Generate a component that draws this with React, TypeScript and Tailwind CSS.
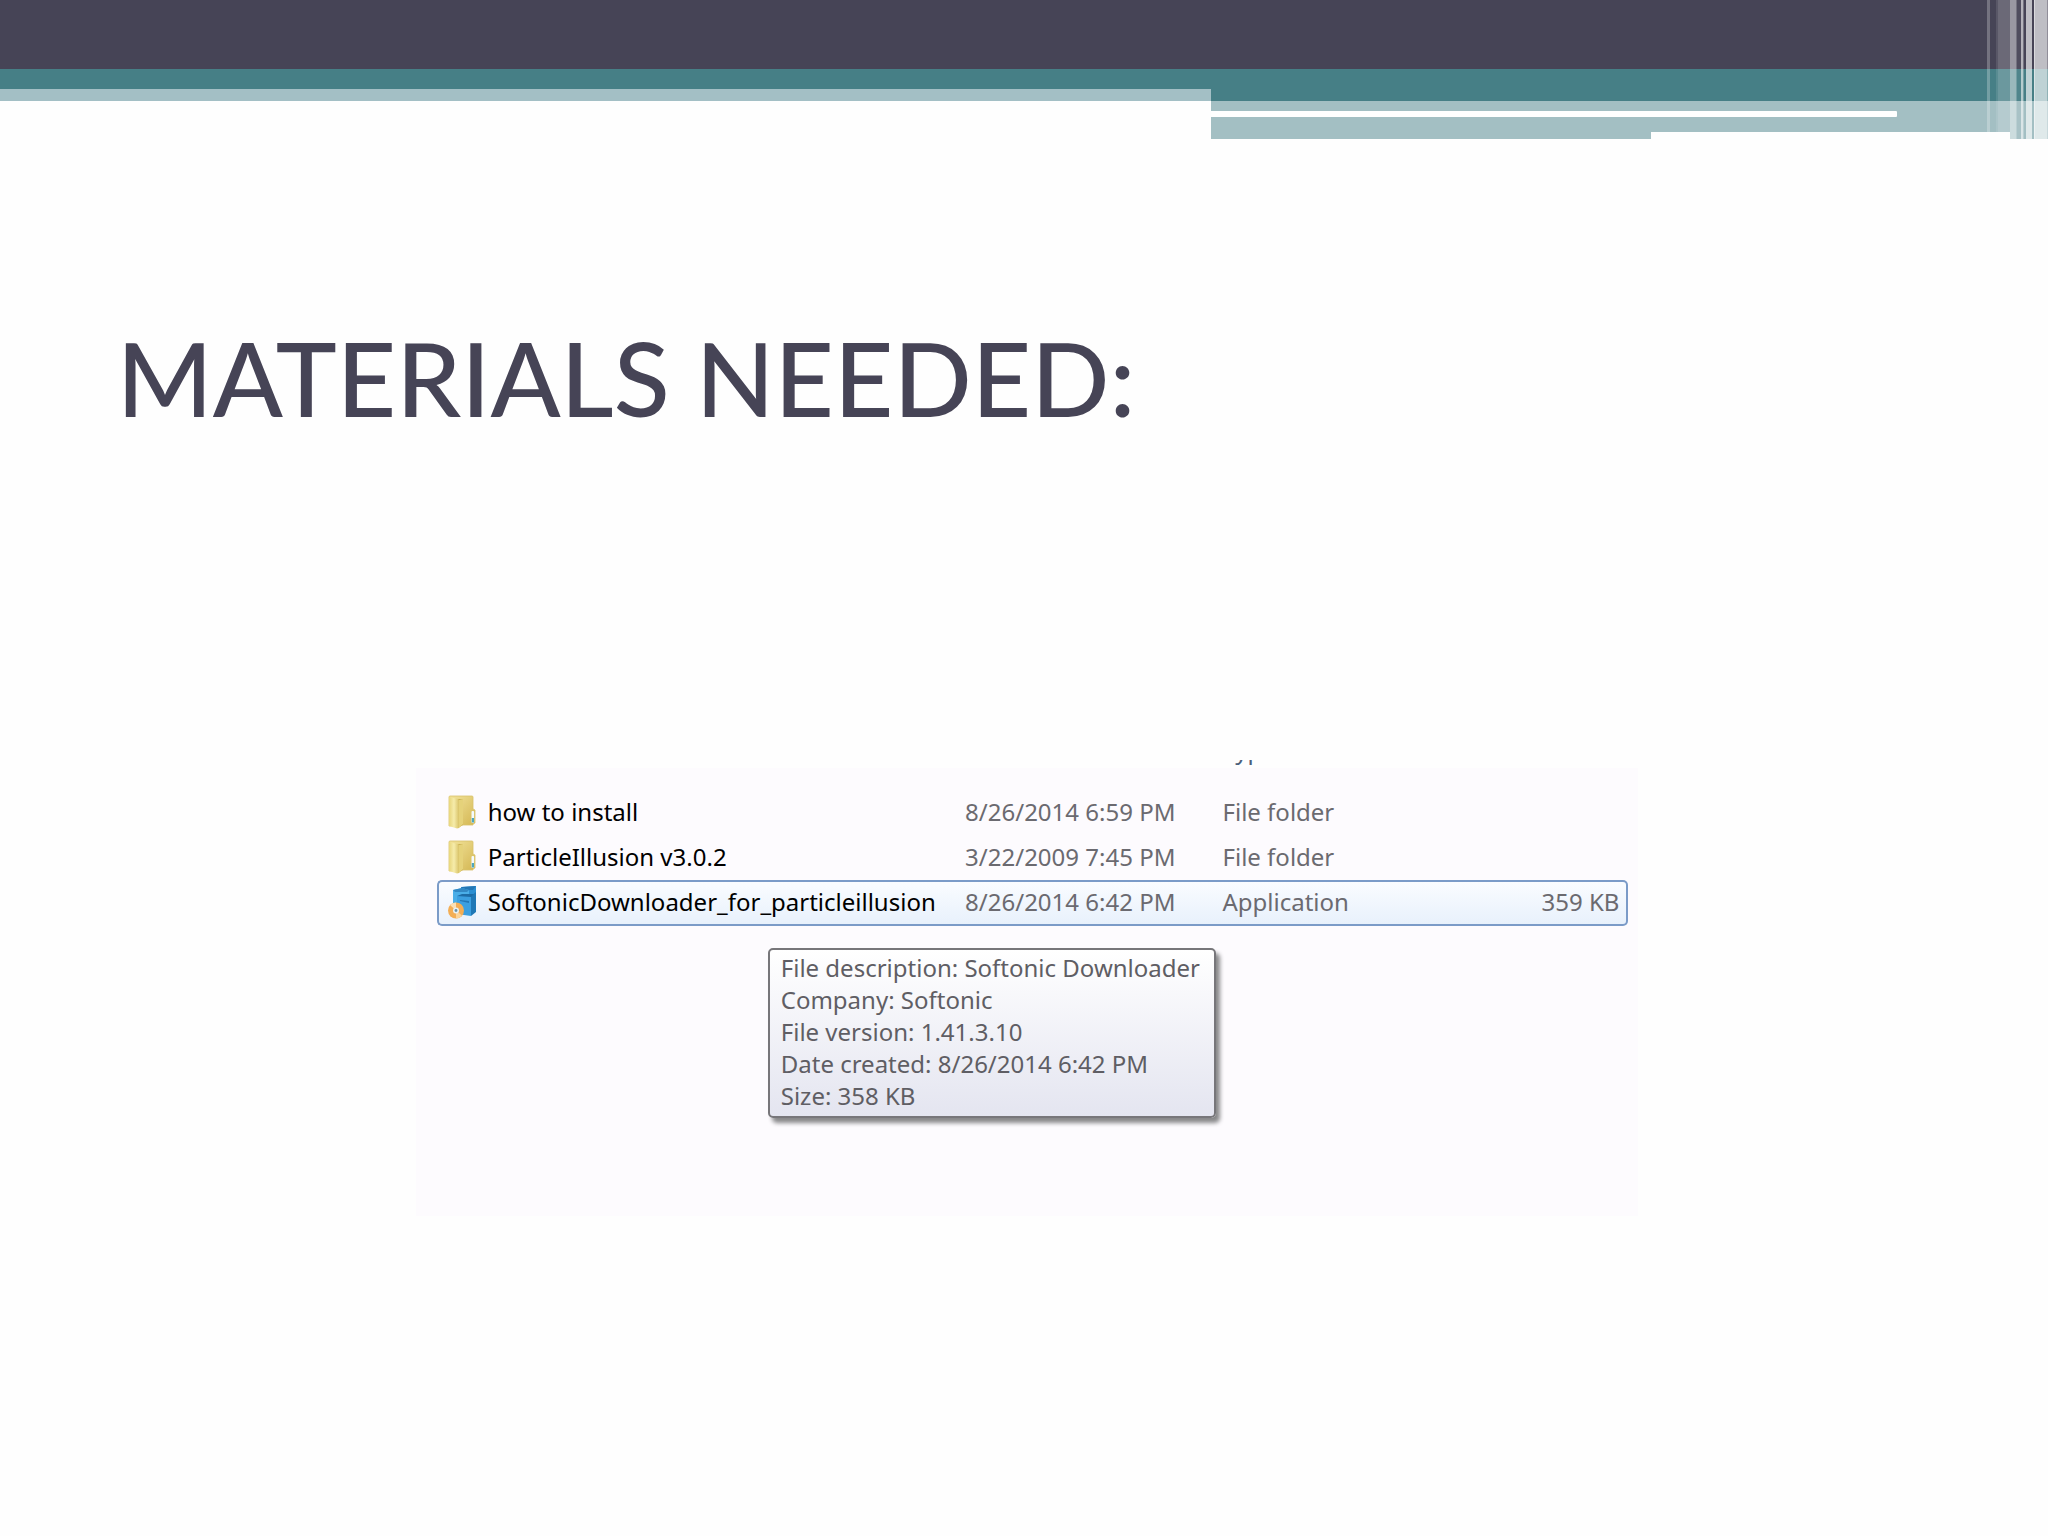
import React from "react";

const files = [
  { icon: <FolderIcon />, name: "how to install", date: "8/26/2014 6:59 PM", type: "File folder", size: "", selected: false },
  { icon: <FolderIcon />, name: "ParticleIllusion v3.0.2", date: "3/22/2009 7:45 PM", type: "File folder", size: "", selected: false },
  { icon: <InstallerIcon />, name: "SoftonicDownloader_for_particleillusion", date: "8/26/2014 6:42 PM", type: "Application", size: "359 KB", selected: true },
];

const details = [
  "File description: Softonic Downloader",
  "Company: Softonic",
  "File version: 1.41.3.10",
  "Date created: 8/26/2014 6:42 PM",
  "Size: 358 KB",
];

// Light streaks at the right end of the banner, left to right
const streaks = [
  "w-[3px] bg-white/25",
  "w-[6px]",
  "w-[2px] bg-white/10",
  "w-[12px] bg-white/20",
  "w-[6px] bg-white/45",
  "w-[1px] bg-white/25",
  "w-[4px] bg-white/5",
  "w-[2px] bg-white/60",
  "w-[1px] bg-white/25",
  "w-[2px]",
  "w-[6px] bg-white/65",
  "w-[2px]",
  "w-[1px] bg-white/80",
  "w-[12px] bg-white/65",
  "w-[1px] bg-white/40",
];

function FolderIcon() {
  return (
    <svg viewBox="0 0 28 34" className="w-7 h-[34px] shrink-0" aria-hidden="true">
      <defs>
        <linearGradient id="folder-back" x1="0" y1="0" x2="1" y2="1">
          <stop offset="0" stopColor="#f3e49c" />
          <stop offset="1" stopColor="#d3b652" />
        </linearGradient>
        <linearGradient id="folder-front" x1="0" y1="0" x2="1" y2="0">
          <stop offset="0" stopColor="#e8d67c" />
          <stop offset="0.5" stopColor="#f6ecab" />
          <stop offset="1" stopColor="#d9c368" />
        </linearGradient>
      </defs>
      <path d="M2 1h22q1 0 1 1v12l2 1v13l-2 1v1H9L1 31V2q0-1 1-1z" fill="url(#folder-back)" stroke="#d8c16b" strokeWidth="0.8" />
      <path d="M9 4h6v26l-5 3z" fill="#c9ae4e" />
      <path d="M1 2l9 2q1 0 1 2v27l-2 0.6L1 31z" fill="url(#folder-front)" />
      <path d="M11 5l4-1v25l-4 4z" fill="#e5d27a" />
      <rect x="23.5" y="16" width="2.6" height="12" rx="1" fill="#f4fbff" />
      <rect x="23.8" y="23" width="2.2" height="4.5" fill="#4ea7bd" />
    </svg>
  );
}

function InstallerIcon() {
  return (
    <svg viewBox="0 0 28 34" className="w-7 h-[34px] shrink-0" aria-hidden="true">
      <path d="M13 2L28 1v25l-5 4-10-4z" fill="#2b8fd2" />
      <path d="M14 2l14-1-3 4H12z" fill="#2477b4" />
      <path d="M5 5l9-2 7 2v19H5z" fill="#4aaee8" />
      <path d="M5 5l9-2 7 2-2 2H7z" fill="#3288c4" />
      <path d="M9 11h14v20l-14-2z" fill="#3b9fe0" />
      <path d="M23 11l5-4v20l-5 4z" fill="#1f78b6" />
      <path d="M9 11l5-2h12l-3 3z" fill="#1d6ca6" />
      <path d="M12 15l9 1v2l-9-2z" fill="#2376b4" />
      <ellipse cx="8" cy="25.5" rx="8" ry="8" fill="#f3ae55" />
      <path d="M8 25.5L2 20q2-2.500 6-2.500z" fill="#fbe0b5" />
      <path d="M8 25.500l6 5q-2 3-6 3z" fill="#fbd49a" />
      <circle cx="8" cy="25.500" r="3" fill="#e9f1f4" />
      <circle cx="8" cy="25.500" r="1.400" fill="#6d93a6" />
    </svg>
  );
}

function Banner() {
  return (
    <header className="relative w-full">
      <div className="h-[69px] bg-[#464456]" />
      <div className="flex items-start">
        <div className="w-[59.13%]">
          <div className="h-5 bg-[#467f86]" />
          <div className="h-3 bg-[#a3bfc5]" />
        </div>
        <div className="flex-1 bg-[#a3bfc3]">
          <div className="h-8 bg-[#467f86]" />
          <div className="mt-[10px] h-[6px] w-[82%] rounded-r-[1px] bg-white" />
          <div className="mt-[15px] ml-[52.6%] mr-[38px] h-[7px] bg-[#fefefe]" />
        </div>
      </div>
      <div className="absolute inset-y-0 right-0 flex">
        {streaks.map((cls, idx) => (
          <div key={idx} className={cls} />
        ))}
      </div>
    </header>
  );
}

function FileTable() {
  return (
    <table className="w-full table-fixed border-separate border-spacing-0 text-left text-[#6b6a70]">
      <thead>
        <tr>
          <th aria-label="Name" className="h-[30px] w-[43.5%] p-0" />
          <th aria-label="Date modified" className="w-[21.6%] p-0" />
          <th className="w-[21.6%] p-0 pl-[10px] align-top font-normal">
            {/* Header is scrolled away, only the tails of the letters show */}
            <div className="flex h-2 items-end overflow-hidden leading-9 text-[#4c607a]">Type</div>
          </th>
          <th aria-label="Size" className="p-0" />
        </tr>
      </thead>
      <tbody>
        {files.map((file) => {
          const cell = file.selected
            ? "h-[46px] p-0 pb-[2px] border-y-2 border-[#7b9bc8] bg-linear-to-b from-[#fafcff] to-[#e8f1fc]"
            : "h-[45px] p-0 pb-[2px]";
          return (
            <tr key={file.name}>
              <td className={cell + (file.selected ? " rounded-l-[5px] border-l-2 pl-[9px]" : " pl-[11px]")}>
                <div className="flex items-center gap-3 whitespace-nowrap text-black">
                  {file.icon}
                  {file.name}
                </div>
              </td>
              <td className={cell + " pl-[10px] whitespace-nowrap"}>{file.date}</td>
              <td className={cell + " pl-[10px] whitespace-nowrap"}>{file.type}</td>
              <td className={cell + (file.selected ? " rounded-r-[5px] border-r-2 pr-[7px]" : " pr-[9px]") + " text-right whitespace-nowrap"}>
                {file.size}
              </td>
            </tr>
          );
        })}
      </tbody>
    </table>
  );
}

export default function App() {
  return (
    <main className="min-h-screen w-full bg-[#fefefe]">
      <Banner />

      <h1 className="mt-[178px] pl-[5.7%] font-['Lato',sans-serif] text-[103px] leading-[120px] font-medium text-[#464456]">
        MATERIALS NEEDED:
      </h1>

      <section className="mt-[323px] ml-[20.3%] w-[59.7%] bg-[linear-gradient(#fefefe_8px,#fdfbfe_8px)] pr-[10px] pb-[98px] pl-[21px] font-['Noto_Sans',sans-serif] text-2xl leading-8">
        <FileTable />

        <div role="tooltip" className="mt-[22px] ml-[331px] w-[448px] rounded-[5px] border-2 border-[#77767a] bg-linear-to-b from-white to-[#e4e5f0] px-[11px] pt-[2px] pb-1 whitespace-nowrap text-[#5f5e64] shadow-[4px_5px_4px_#88888a]">
          {details.map((line) => (
            <p key={line}>{line}</p>
          ))}
        </div>
      </section>
    </main>
  );
}
